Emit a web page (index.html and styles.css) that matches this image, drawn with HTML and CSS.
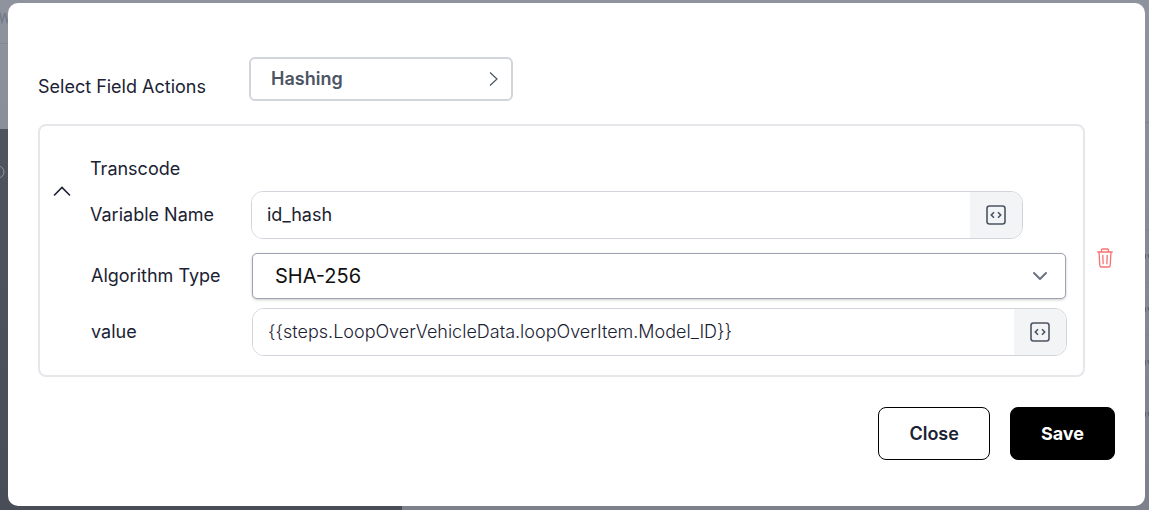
FILE: index.html
```html
<!DOCTYPE html>
<html lang="en">
<head>
<meta charset="utf-8">
<meta name="viewport" content="width=device-width, initial-scale=1">
<title>Select Field Actions</title>
<link rel="stylesheet" href="styles.css">
</head>
<body>
<div class="backdrop" aria-hidden="true">
  <div class="backdrop-side"></div>
  <svg class="backdrop-left" width="8" height="200" viewBox="0 0 8 200" fill="none">
    <path d="M0 13l2 9 3-9M5 13l2 9 1-3" stroke="#747b8b" stroke-width="1.6"/>
    <path d="M0 43.500h8" stroke="#848894"/>
    <circle cx="-2" cy="172" r="6" stroke="#9297a1"/>
  </svg>
  <svg class="backdrop-right" width="4" height="510" viewBox="0 0 4 510" fill="none">
    <path d="M0 122.500h4M0 229.500h4M0 282.500h4M0 335.500h4M0 440.500h4" stroke="#7f838f"/>
    <path d="M0 254q1 2 0 5M3 254l1 4M0 307q1 2 0 5M3 307l1 4M0 360q1 2 0 5M3 360l1 4M0 412q1 2 0 5M3 412l1 4" stroke="#555b68"/>
  </svg>
</div>
<main class="modal" role="dialog" aria-label="Select Field Actions">
  <div class="action-row">
    <span class="action-label" id="action-label">Select Field Actions</span>
    <button class="action-picker" type="button" aria-describedby="action-label">
      Hashing
      <svg width="9" height="16" viewBox="0 0 9 16" fill="none" stroke="currentColor" stroke-width="1.200"><path d="M1 1.500l7 6.500-7 6.500"/></svg>
    </button>
  </div>
  <div class="item">
    <section class="card">
      <button class="toggle" type="button" aria-label="Collapse">
        <svg width="18" height="10" viewBox="0 0 18 10" fill="none" stroke="currentColor" stroke-width="1.600" stroke-linecap="round"><path d="M1.500 9L9 1.500 16.500 9"/></svg>
      </button>
      <div class="form">
        <h2 class="title">Transcode</h2>
        <div class="row row-name">
          <label for="name">Variable Name</label>
          <div class="field">
            <input id="name" type="text" value="id_hash">
            <button class="addon" type="button" aria-label="Insert variable">
              <svg width="20" height="20" viewBox="0 0 20 20" fill="none" stroke="currentColor" stroke-width="1.600"><rect x="1" y="1" width="18" height="18" rx="2.500"/><path d="M8 7.300L5.300 10 8 12.700M12 7.300l2.700 2.700-2.700 2.700"/></svg>
            </button>
          </div>
        </div>
        <div class="row row-select">
          <label for="algorithm">Algorithm Type</label>
          <div class="select">
            <select id="algorithm"><option>SHA-256</option></select>
            <svg class="caret" width="16" height="10" viewBox="0 0 16 10" fill="none" stroke="currentColor" stroke-width="2" stroke-linecap="round" stroke-linejoin="round"><path d="M2 2l6 6 6-6"/></svg>
          </div>
        </div>
        <div class="row row-value">
          <label for="value">value</label>
          <div class="field">
            <input id="value" class="soft" type="text" value="{{steps.LoopOverVehicleData.loopOverItem.Model_ID}}">
            <button class="addon" type="button" aria-label="Insert variable">
              <svg width="20" height="20" viewBox="0 0 20 20" fill="none" stroke="currentColor" stroke-width="1.600"><rect x="1" y="1" width="18" height="18" rx="2.500"/><path d="M8 7.300L5.300 10 8 12.700M12 7.300l2.700 2.700-2.700 2.700"/></svg>
            </button>
          </div>
        </div>
      </div>
    </section>
    <button class="delete" type="button" aria-label="Delete">
      <svg width="16" height="20" viewBox="0 0 16 20" fill="none" stroke="currentColor" stroke-width="1.300" stroke-linecap="round" stroke-linejoin="round"><path d="M.7 4h14.600M4.500 4V2.200Q4.500 1 5.700 1h4.600q1.200 0 1.200 1.200V4M2 4l.8 13.300Q3 19 4.400 19h7.200q1.400 0 1.600-1.700L14 4M5.800 7.300l.3 8.400M10.200 7.300l-.3 8.400"/></svg>
    </button>
  </div>
  <div class="footer">
    <button class="btn btn-close" type="button">Close</button>
    <button class="btn btn-save" type="button">Save</button>
  </div>
</main>
</body>
</html>
```
FILE: styles.css
```css
* {
  box-sizing: border-box;
}

body {
  margin: 0;
  min-height: 100vh;
  display: flex;
  padding: 3px 4px 4px 8px;
  background: #8b8f9a;
  font-family: Inter, "Liberation Sans", sans-serif;
  font-size: 18px;
  line-height: 24px;
  color: #1a2233;
}

button,
input,
select {
  font: inherit;
  color: inherit;
  margin: 0;
}

button {
  border: 0;
  padding: 0;
  background: none;
  cursor: pointer;
}

svg {
  display: block;
  flex: none;
}

.backdrop {
  position: fixed;
  inset: 0;
  z-index: -1;
  overflow: hidden;
  background: linear-gradient(#8f939e, #7d818c);
}

.backdrop-side {
  position: absolute;
  top: 129px;
  bottom: 0;
  left: 0;
  width: 35%;
  background: linear-gradient(#50545f, #494d57);
}

.backdrop-left {
  position: absolute;
  left: 0;
  top: 0;
}

.backdrop-right {
  position: absolute;
  right: 0;
  top: 0;
}

.modal {
  flex: 1;
  min-width: 0;
  padding: 54px 30px 46px;
  border-radius: 10px;
  background: #fff;
}

.action-row {
  display: flex;
  align-items: center;
}

.action-label {
  width: 211px;
  padding-top: 16px;
}

.action-picker {
  display: flex;
  align-items: center;
  justify-content: space-between;
  width: 264px;
  height: 44px;
  padding: 0 13px 0 20px;
  border: 2px solid #d1d5db;
  border-radius: 6px;
  font-weight: 600;
  color: #4b5563;
}

.item {
  display: flex;
  align-items: center;
  gap: 12px;
  margin-top: 23px;
}

.card {
  flex: 1;
  min-width: 0;
  display: flex;
  padding: 31px 16px 19px 13px;
  border: 2px solid #e5e7eb;
  border-radius: 8px;
}

.toggle {
  align-self: flex-start;
  margin-top: 29px;
}

.form {
  flex: 1;
  min-width: 0;
  padding-left: 19px;
}

.title {
  margin: 0 0 10px;
  font-size: 18px;
  font-weight: 400;
}

.row {
  display: flex;
  align-items: center;
}

.row label {
  flex: none;
  width: 161px;
}

.row-name {
  margin-right: 44px;
}

.row-select {
  margin: 14px 0 9px;
  padding: 0 1px;
}

.row-value {
  padding-left: 1px;
}

.field {
  flex: 1;
  min-width: 0;
  display: flex;
  height: 48px;
  border: 1px solid #d1d5db;
  border-radius: 12px;
  overflow: hidden;
}

.field input {
  flex: 1;
  min-width: 0;
  padding: 0 15px;
  border: 0;
  outline: 0;
  background: #fff;
}

.field .soft {
  font-weight: 300;
}

.addon {
  display: flex;
  align-items: center;
  justify-content: center;
  width: 52px;
  background: #f3f4f6;
  color: #4b5563;
}

.select {
  flex: 1;
  min-width: 0;
  display: grid;
  align-items: center;
}

.select select,
.caret {
  grid-area: 1 / 1;
}

.select select {
  appearance: none;
  width: 100%;
  height: 46px;
  padding: 0 22px;
  border: 1px solid #9ca3af;
  border-radius: 5px;
  background: #fff;
  box-shadow: 0 1px 3px rgba(0, 0, 0, 0.2);
  font-size: 20px;
  color: #111;
}

.caret {
  justify-self: end;
  margin-right: 18px;
  color: #6b7280;
  pointer-events: none;
}

.delete {
  margin: 14px 2px 0 0;
  color: #f87171;
}

.footer {
  display: flex;
  justify-content: flex-end;
  gap: 20px;
  margin-top: 30px;
}

.btn {
  height: 53px;
  padding: 0 30px;
  border: 1px solid #000;
  border-radius: 8px;
  font-weight: 600;
}

.btn-save {
  background: #000;
  color: #fff;
  font-weight: 700;
}
```
